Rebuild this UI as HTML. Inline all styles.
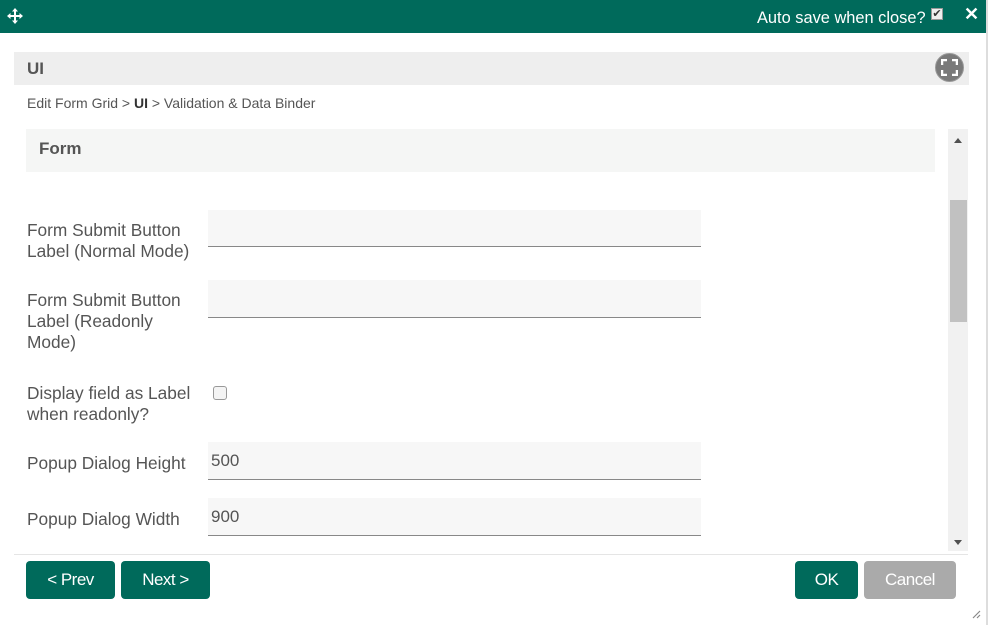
<!DOCTYPE html>
<html><head><style>
*{margin:0;padding:0;box-sizing:border-box}
body{width:990px;height:625px;background:#fff;font-family:"Liberation Sans",sans-serif;position:relative;overflow:hidden;color:#555}
.a{position:absolute}
.top{left:0;top:0;width:987px;height:33px;background:#006a5b}
.lbl{left:27px;font-size:17.3px;line-height:21px;color:#555;white-space:nowrap}
.inp{left:208px;width:493px;background:#f7f7f7;border-bottom:1px solid #888;font-size:17px;color:#555;padding-left:3px}
.btn{top:561px;height:38px;border-radius:4px;color:#fff;font-size:17px;text-align:center;line-height:37px;background:#006a5b;letter-spacing:-0.5px}
</style></head><body>
<div class="a top"></div>
<div class="a" style="left:986px;top:0;width:2px;height:625px;background:#ddd"></div>
<svg class="a" style="left:7px;top:8px" width="16" height="16" viewBox="0 0 16 16"><path d="M8 0L11 3.5H9V7H12.5V5L16 8L12.5 11V9H9V12.5H11L8 16L5 12.5H7V9H3.5V11L0 8L3.5 5V7H7V3.5H5Z" fill="#fff"/></svg>
<div class="a" style="left:757px;top:9px;font-size:16.4px;color:#fff">Auto save when close?</div>
<div class="a" style="left:931px;top:8px;width:12px;height:12px;background:#eee;border:1px solid #999;font-size:11px;line-height:10px;color:#333;text-align:center">✔</div>
<div class="a" style="left:964px;top:4px;font-size:18px;color:#fff;font-weight:bold">✕</div>
<div class="a" style="left:14px;top:52px;width:955px;height:33px;background:#eee"></div>
<div class="a" style="left:27px;top:59px;font-size:17px;font-weight:bold;color:#555">UI</div>
<div class="a" style="left:935px;top:53px;width:29px;height:29px;border-radius:50%;background:#7a7a7a;border:1px solid #999"></div>
<svg class="a" style="left:941px;top:59px" width="17" height="17" viewBox="0 0 17 17" fill="none" stroke="#fff" stroke-width="2.5"><path d="M1 6V1H6M11 1H16V6M16 11V16H11M6 16H1V11"/></svg>
<div class="a" style="left:27px;top:95px;font-size:14px;color:#555;white-space:nowrap">Edit Form Grid &gt; <b style="color:#333">UI</b> &gt; Validation &amp; Data Binder</div>
<div class="a" style="left:26px;top:129px;width:909px;height:43px;background:#f5f6f5"></div>
<div class="a" style="left:39px;top:139px;font-size:17px;font-weight:bold;color:#555">Form</div>
<div class="a lbl" style="top:220px">Form Submit Button<br>Label (Normal Mode)</div>
<div class="a inp" style="top:210px;height:37px"></div>
<div class="a lbl" style="top:290px">Form Submit Button<br>Label (Readonly<br>Mode)</div>
<div class="a inp" style="top:280px;height:38px"></div>
<div class="a lbl" style="top:383px">Display field as Label<br>when readonly?</div>
<div class="a" style="left:213px;top:386px;width:14px;height:14px;border:1px solid #999;border-radius:3px;background:#f4f4f4"></div>
<div class="a lbl" style="top:453px">Popup Dialog Height</div>
<div class="a inp" style="top:442px;height:38px;line-height:37px">500</div>
<div class="a lbl" style="top:509px">Popup Dialog Width</div>
<div class="a inp" style="top:498px;height:38px;line-height:37px">900</div>
<div class="a" style="left:948px;top:129px;width:20px;height:422px;background:#f1f1f1"></div>
<div class="a" style="left:950px;top:200px;width:17px;height:122px;background:#c1c1c1"></div>
<div class="a" style="left:954px;top:138px;width:0;height:0;border-left:4px solid transparent;border-right:4px solid transparent;border-bottom:5px solid #505050"></div>
<div class="a" style="left:954px;top:540px;width:0;height:0;border-left:4px solid transparent;border-right:4px solid transparent;border-top:5px solid #505050"></div>
<div class="a" style="left:14px;top:554px;width:954px;height:1px;background:#e5e5e5"></div>
<div class="a btn" style="left:26px;width:89px">&lt; Prev</div>
<div class="a btn" style="left:121px;width:89px">Next &gt;</div>
<div class="a btn" style="left:795px;width:63px">OK</div>
<div class="a btn" style="left:864px;width:92px;background:#aaa">Cancel</div>
<svg class="a" style="left:971px;top:609px" width="10" height="10"><path d="M9 2L2 9M9 6L6 9" stroke="#888" stroke-width="1.2"/></svg>
</body></html>
